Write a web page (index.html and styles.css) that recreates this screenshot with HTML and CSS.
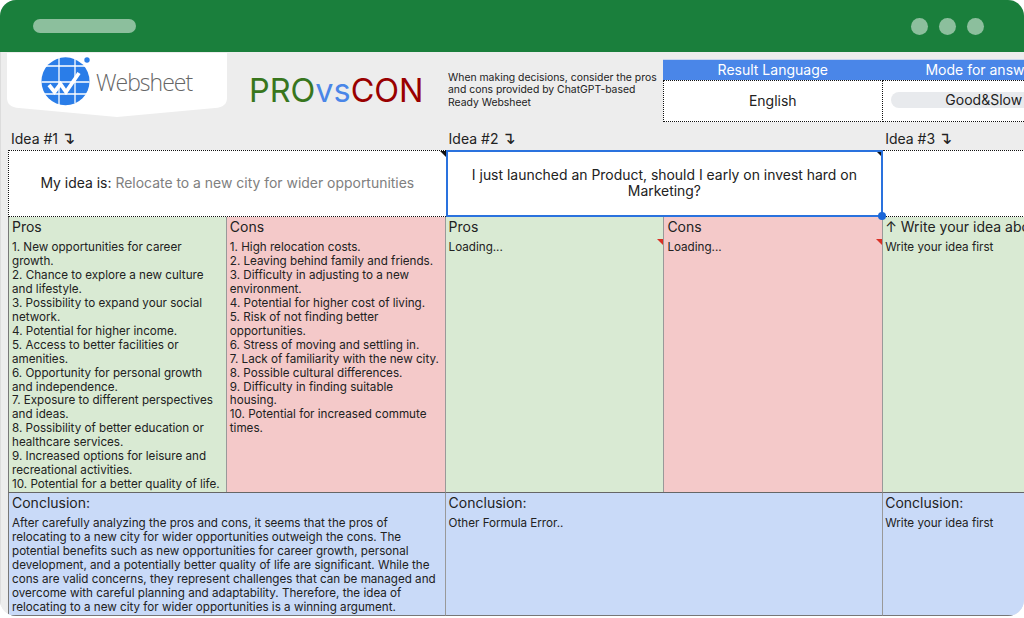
FILE: index.html
```html
<!DOCTYPE html>
<html lang="en">
<head>
<meta charset="utf-8">
<title>PROvsCON Websheet</title>
<link rel="stylesheet" href="styles.css">
</head>
<body>
<div class="window">
  <header class="titlebar">
    <span class="url-pill"></span>
    <span class="dots"><i></i><i></i><i></i></span>
  </header>
  <main class="page">
    <section class="top">
      <div class="logo">
        <svg class="globe" width="54" height="54" viewBox="0 0 54 54" aria-hidden="true">
          <circle cx="24.500" cy="25.300" r="24" fill="#2a7de8"/>
          <g stroke="#fff" stroke-width="1.3" fill="none">
            <path d="M18 1.500V49M34 3V47.500M3.500 10H45.500M0.500 26H48.500M3 38H46"/>
          </g>
          <path d="M8 29L13.500 36L19.500 28L25 36L38 17" stroke="#fff" stroke-width="3.800" fill="none"/>
          <circle cx="46" cy="4" r="2.700" fill="#2a7de8"/>
        </svg>
        <span class="logo-name">Websheet</span>
      </div>
      <h1 class="brand"><span class="pro">PRO</span><span class="vs">vs</span><span class="con">CON</span></h1>
      <p class="intro">When making decisions, consider the pros and cons provided by ChatGPT-based Ready Websheet</p>
      <div class="settings">
        <div class="set-head">Result Language</div>
        <div class="set-head mode">Mode for answers</div>
        <div class="set-cell">English</div>
        <div class="set-cell"><span class="chip">Good&amp;Slow</span></div>
      </div>
    </section>
    <section class="sheet">
      <div class="label span2">Idea #1 <span class="turn">↴</span></div>
      <div class="label span2">Idea #2 <span class="turn">↴</span></div>
      <div class="label span2 col3">Idea #3 <span class="turn">↴</span></div>

      <div class="idea span2 first"><span>My idea is: <span class="muted">Relocate to a new city for wider opportunities</span></span><i class="note-black"></i></div>
      <div class="idea span2 selected"><span>I just launched an Product, should I early on invest hard on Marketing?</span><i class="note-black"></i><i class="handle"></i></div>
      <div class="idea span2 third"></div>

      <div class="cell pros first">
        <h2>Pros</h2>
        <ol class="list">
          <li>1. New opportunities for career growth.</li>
          <li>2. Chance to explore a new culture and lifestyle.</li>
          <li>3. Possibility to expand your social network.</li>
          <li>4. Potential for higher income.</li>
          <li>5. Access to better facilities or amenities.</li>
          <li>6. Opportunity for personal growth and independence.</li>
          <li>7. Exposure to different perspectives and ideas.</li>
          <li>8. Possibility of better education or healthcare services.</li>
          <li>9. Increased options for leisure and recreational activities.</li>
          <li>10. Potential for a better quality of life.</li>
        </ol>
      </div>
      <div class="cell cons">
        <h2>Cons</h2>
        <ol class="list">
          <li>1. High relocation costs.</li>
          <li>2. Leaving behind family and friends.</li>
          <li>3. Difficulty in adjusting to a new environment.</li>
          <li>4. Potential for higher cost of living.</li>
          <li>5. Risk of not finding better opportunities.</li>
          <li>6. Stress of moving and settling in.</li>
          <li>7. Lack of familiarity with the new city.</li>
          <li>8. Possible cultural differences.</li>
          <li>9. Difficulty in finding suitable housing.</li>
          <li>10. Potential for increased commute times.</li>
        </ol>
      </div>
      <div class="cell pros"><h2>Pros</h2><p class="body">Loading...</p><i class="note-red"></i></div>
      <div class="cell cons"><h2>Cons</h2><p class="body">Loading...</p><i class="note-red"></i></div>
      <div class="cell pros wide col3"><h2>↑ Write your idea above</h2><p class="body">Write your idea first</p></div>

      <div class="cell concl span2 first">
        <h2>Conclusion:</h2>
        <p class="body">After carefully analyzing the pros and cons, it seems that the pros of relocating to a new city for wider opportunities outweigh the cons. The potential benefits such as new opportunities for career growth, personal development, and a potentially better quality of life are significant. While the cons are valid concerns, they represent challenges that can be managed and overcome with careful planning and adaptability. Therefore, the idea of relocating to a new city for wider opportunities is a winning argument.</p>
      </div>
      <div class="cell concl span2"><h2>Conclusion:</h2><p class="body">Other Formula Error..</p></div>
      <div class="cell concl span2 col3"><h2>Conclusion:</h2><p class="body">Write your idea first</p></div>
    </section>
  </main>
</div>
</body>
</html>
```
FILE: styles.css
```css
* { box-sizing: border-box; }
html, body { margin: 0; padding: 0; background: #fff; overflow: hidden; }
body { width: 1024px; height: 618px; font-family: Inter, "Liberation Sans", sans-serif; color: #222; }

.window {
  width: 1024px;
  height: 616px;
  border-radius: 16px;
  overflow: hidden;
  display: flex;
  flex-direction: column;
  background: #ededed;
}

.titlebar {
  flex: 0 0 52px;
  background: #1a7f3c;
  display: flex;
  align-items: center;
  justify-content: space-between;
  padding: 0 40px 0 33px;
}
.url-pill { width: 103px; height: 14px; border-radius: 7px; background: #8cbf9d; }
.dots { display: flex; gap: 11px; }
.dots i { width: 17px; height: 17px; border-radius: 50%; background: #8cbf9d; }

.page { flex: 1; min-height: 0; overflow: hidden; border-left: 1px solid #dcdcdc; background: #ededed; padding-left: 7px; }

.top { display: flex; height: 78px; align-items: flex-start; width: 1300px; }

.logo {
  width: 220px;
  height: 65px;
  margin-left: -1px;
  margin-top: 1px;
  flex: none;
  background: #fff;
  clip-path: path("M0 0H220V45Q220 54 208 55L110 64L12 55Q0 54 0 45Z");
  display: flex;
  align-items: flex-start;
  padding: 3px 0 0 34px;
}
.globe { display: block; flex: none; }
.logo-name {
  margin: 10px 0 0 1px;
  font-family: "Open Sans", sans-serif;
  font-weight: 300;
  font-size: 23px;
  line-height: 32px;
  letter-spacing: -1px;
  color: #666;
}

.brand { margin: 19px 0 0 22px; font-size: 32.4px; line-height: 40px; font-weight: 400; width: 199px; flex: none; white-space: nowrap; }
.pro { color: #38761d; }
.vs { color: #4a86e8; }
.con { color: #990000; }

.intro { margin: 20px 0 0 0; width: 215px; flex: none; font-size: 10.4px; line-height: 12.3px; color: #222; }

.settings {
  margin: 7px 0 0 0;
  flex: none;
  display: grid;
  grid-template-columns: 219.5px 219.5px;
  grid-template-rows: 21px 42px;
}
.set-head { background: #4a86e8; color: #fff; font-size: 14px; line-height: 19px; text-align: center; border-top: 1px solid #c9d6ee; }
.set-head.mode { padding-right: 14px; }
.set-cell {
  background: #fff;
  font-size: 14px;
  text-align: center;
  display: flex;
  align-items: center;
  justify-content: center;
  padding-bottom: 2px;
  border: 1px dotted #111;
  border-left-width: 0;
}
.set-cell:nth-child(3) { border-left-width: 1px; }
.chip { width: 190px; margin-left: -12px; padding-right: 4px; height: 16px; line-height: 16px; border-radius: 8px; background: #e8eaed; }

.sheet {
  display: grid;
  grid-template-columns: repeat(6, 218.8px);
  grid-template-rows: 20px 67px 275px 124px;
  width: 1313px;
}
.span2 { grid-column: span 2; }

.label { font-size: 14px; line-height: 18px; padding: 0 0 0 3px; white-space: nowrap; color: #222; }
.turn { font-family: "DejaVu Sans", sans-serif; font-size: 17px; line-height: 14px; margin-left: -1px; }

.idea {
  position: relative;
  background: #fff;
  font-size: 13.95px;
  line-height: 16.5px;
  display: flex;
  align-items: center;
  justify-content: center;
  text-align: center;
  padding: 0 16px 1px;
  border-top: 1px dotted #111;
  border-bottom: 1px dotted #111;
}
.idea.first { border-left: 1px dotted #111; }
.muted { color: #808080; }
.selected { border: 2px solid #2a72de; z-index: 2; }
.note-black { position: absolute; top: 0; right: 0; width: 0; height: 0; border-top: 6px solid #111; border-left: 6px solid transparent; }
.selected .note-black { border-top-width: 4px; border-left-width: 4px; }
.handle { position: absolute; right: -5px; bottom: -5px; width: 8px; height: 8px; border-radius: 50%; background: #1a66d8; }

.cell { position: relative; padding: 1px 3px 0; border-right: 1px solid #999; overflow: hidden; }
.cell.first { border-left: 1px solid #777; }
.pros { background: #d9ead3; }
.cons { background: #f4c9c9; }
.concl { background: #c9daf8; border-top: 1px solid #666; border-bottom: 1px solid #777; padding-top: 1px; }
.wide { grid-column: span 2; border-right: 0; }
.cell.col3, .label.col3 { padding-left: 2px; }

h2 { margin: 0 0 5px; font-size: 14px; line-height: 18px; font-weight: 400; color: #222; }
.list { list-style: none; margin: 0; padding: 0; }
.list, .body { font-size: 11.65px; line-height: 13.95px; color: #222; }
.body { margin: 0; }

.note-red { position: absolute; top: 22px; right: 0; width: 0; height: 0; border-top: 6px solid #d93025; border-left: 6px solid transparent; }
```
